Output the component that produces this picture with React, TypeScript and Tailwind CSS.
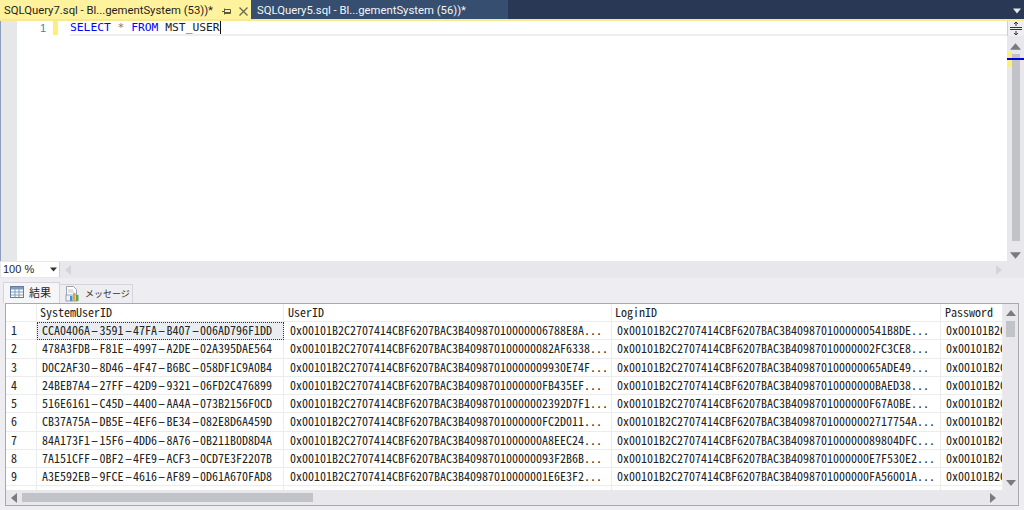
const rows = [
  ["CCA0406A-3591-47FA-B407-006AD796F1DD", "0x00101B2C2707414CBF6207BAC3B40987010000006788E8A...", "0x00101B2C2707414CBF6207BAC3B4098701000000541B8DE..."],
  ["478A3FDB-F81E-4997-A2DE-02A395DAE564", "0x00101B2C2707414CBF6207BAC3B409870100000082AF6338...", "0x00101B2C2707414CBF6207BAC3B40987010000002FC3CE8..."],
  ["D0C2AF30-8D46-4F47-B6BC-058DF1C9A0B4", "0x00101B2C2707414CBF6207BAC3B40987010000009930E74F...", "0x00101B2C2707414CBF6207BAC3B409870100000065ADE49..."],
  ["24BEB7A4-27FF-42D9-9321-06FD2C476899", "0x00101B2C2707414CBF6207BAC3B4098701000000FB435EF...", "0x00101B2C2707414CBF6207BAC3B40987010000000BAED38..."],
  ["516E6161-C45D-4400-AA4A-073B2156F0CD", "0x00101B2C2707414CBF6207BAC3B40987010000002392D7F1...", "0x00101B2C2707414CBF6207BAC3B4098701000000F67A0BE..."],
  ["CB37A75A-DB5E-4EF6-BE34-082E8D6A459D", "0x00101B2C2707414CBF6207BAC3B4098701000000FC2D011...", "0x00101B2C2707414CBF6207BAC3B40987010000002717754A..."],
  ["84A173F1-15F6-4DD6-8A76-0B211B0D8D4A", "0x00101B2C2707414CBF6207BAC3B4098701000000A8EEC24...", "0x00101B2C2707414CBF6207BAC3B409870100000089804DFC..."],
  ["7A151CFF-0BF2-4FE9-ACF3-0CD7E3F2207B", "0x00101B2C2707414CBF6207BAC3B409870100000093F2B6B...", "0x00101B2C2707414CBF6207BAC3B4098701000000E7F530E2..."],
  ["A3E592EB-9FCE-4616-AF89-0D61A670FAD8", "0x00101B2C2707414CBF6207BAC3B40987010000001E6E3F2...", "0x00101B2C2707414CBF6207BAC3B4098701000000FA56001A..."],
];

const cols = "grid grid-cols-[31px_247px_328px_329px_62px]";
const cell = "border-r border-b border-[#ececec] overflow-hidden whitespace-nowrap";

function Tri({ dir, color = "#7a7a80", size = 9 }: { dir: "up" | "down" | "left" | "right"; color?: string; size?: number }) {
  const pts = { up: "0,8 5,2 10,8", down: "0,2 10,2 5,8", left: "8,0 8,10 2,5", right: "2,0 2,10 8,5" }[dir];
  return (
    <svg width={size} height={size} viewBox="0 0 10 10" className="block shrink-0">
      <polygon points={pts} fill={color} />
    </svg>
  );
}

function GridIcon() {
  return (
    <svg width="14" height="12" viewBox="0 0 14 12" className="block shrink-0">
      <rect x="0.5" y="0.5" width="13" height="11" fill="#fff" stroke="#5f7da3" />
      <rect x="1" y="1" width="12" height="2.5" fill="#7d9cc4" />
      <path d="M1 6h12M1 9h12M5 1v10M9 1v10" stroke="#7f9abb" strokeWidth="1" />
    </svg>
  );
}

function MsgIcon() {
  return (
    <svg width="15" height="16" viewBox="0 0 15 16" className="block shrink-0">
      <path d="M1.5 0.5h7l3 3v6h-10z" fill="#fff" stroke="#9aa3ad" />
      <path d="M3 4h5M3 6h6" stroke="#b9c2cc" />
      <rect x="1" y="9" width="11" height="6" fill="#f2f2f2" stroke="#9aa3ad" />
      <rect x="5" y="10" width="2.5" height="5" fill="#4f8fd0" />
      <rect x="8" y="7" width="2.5" height="8" fill="#e8a33d" />
      <rect x="11" y="9" width="2.5" height="6" fill="#5aa55a" />
    </svg>
  );
}

function Guid({ value }: { value: string }) {
  const parts = value.split("-");
  return (
    <>
      {parts.map((p, i) => (
        <span key={i}>
          {i > 0 && <span className="inline-block w-[9.5px] text-center scale-x-[1.7]">-</span>}
          {p}
        </span>
      ))}
    </>
  );
}

export default function App() {
  return (
    <div className="w-[1024px] h-[510px] overflow-hidden flex flex-col bg-[#eeeef2] font-['Liberation_Sans',sans-serif] text-[#1e1e1e]">
      {/* Tab strip */}
      <div className="h-[19px] shrink-0 bg-[#293955] flex items-stretch">
        <div className="w-[251px] bg-[#fff29d] flex items-center pl-[4px] pt-[3px] font-['Roboto',sans-serif] text-[11.3px] leading-[14px] text-[#1e1e1e] shrink-0">
          <span className="whitespace-nowrap">SQLQuery7.sql - Bl...gementSystem (53))*</span>
          <svg width="9" height="7" viewBox="0 0 9 7" className="ml-auto mr-[8px]">
            <path d="M0 3.5h2.5M2.5 0.5v6M2.5 1.5h6v4h-6M3 4.5h5" fill="none" stroke="#5b5b45" strokeWidth="1" />
          </svg>
          <svg width="9" height="9" viewBox="0 0 9 9" className="mr-[3px]">
            <path d="M0.5 0.5l8 8M8.5 0.5l-8 8" stroke="#6b6b55" strokeWidth="1.4" />
          </svg>
        </div>
        <div className="w-[257px] bg-[#364e6f] flex items-center pl-[6px] pt-[3px] font-['Roboto',sans-serif] text-[11.3px] leading-[14px] text-[#f4f6f9] shrink-0">
          <span className="whitespace-nowrap">SQLQuery5.sql - Bl...gementSystem (56))*</span>
        </div>
        <div className="flex-1 flex items-center justify-end pr-[3px] pt-[3px]">
          <Tri dir="down" color="#e6e9ef" size={8} />
        </div>
      </div>
      <div className="h-[2px] shrink-0 bg-[#f7e98e]" />

      {/* Editor */}
      <div className="h-[240px] shrink-0 flex bg-white">
        <div className="w-[17px] shrink-0 bg-[#e6e7e8] border-l border-[#8d9cba]" />
        <div className="w-[36px] shrink-0 flex justify-end items-start text-[11px] text-[#2b91af] pr-[7px] h-[14px] leading-[14px]">1</div>
        <div className="w-[5px] h-[14px] shrink-0 bg-[#fdee7d]" />
        <div className="flex-1 pl-[12px]">
          <div className="h-[13px] border-b-2 border-[#eeeef2] box-content font-['DejaVu_Sans_Mono',monospace] text-[11.3px] leading-[13px] whitespace-nowrap flex items-center">
            <span className="text-[#0000ff]">SELECT</span>
            <span className="text-[#777]">&nbsp;*&nbsp;</span>
            <span className="text-[#0000ff]">FROM</span>
            <span className="text-[#222]">&nbsp;MST_USER</span>
            <span className="w-px h-[13px] bg-[#111]" />
          </div>
        </div>
        <div className="w-[17px] shrink-0 bg-[#e8e8ec] flex flex-col items-center relative">
          <div className="h-[15px] w-full flex items-center justify-center bg-[#eeeef2] border-l border-[#cccedb]">
            <svg width="12" height="13" viewBox="0 0 12 13">
              <path d="M0 5.5h12M0 7.5h12M6 0v4M6 9v4M4 2l2-2 2 2M4 11l2 2 2-2" fill="none" stroke="#333" strokeWidth="1" />
            </svg>
          </div>
          <div className="mt-[5px]"><Tri dir="up" size={11} /></div>
          <div className="mt-[2px] w-[8px] h-[187px] bg-[#c2c3c9]" />
          <div className="mt-[9px]"><Tri dir="down" size={11} /></div>
          <div className="absolute left-[1px] top-[31px] w-[4px] h-[15px] bg-[#fdee7d]" />
          <div className="absolute left-0 right-0 top-[37px] h-[2px] bg-[#0000dd]" />
        </div>
      </div>

      {/* Zoom bar */}
      <div className="h-[17px] shrink-0 bg-[#e8e8ec] flex items-center">
        <div className="w-[59px] h-[15px] ml-[1px] bg-white border-r border-[#cccedb] flex items-center pl-[2px] text-[11px]">
          100 %
          <span className="ml-auto mr-[2px]"><Tri dir="down" color="#333" size={7} /></span>
        </div>
        <span className="ml-[3px]"><Tri dir="left" color="#d4d5da" size={10} /></span>
        <span className="ml-auto mr-[20px]"><Tri dir="right" color="#d4d5da" size={10} /></span>
      </div>

      {/* Result tabs */}
      <div className="h-[25px] shrink-0 flex items-end pl-[3px] text-[11px]">
        <div className="w-[57px] h-[21px] bg-[#f6f6f8] border border-b-0 border-[#d4d4da] flex items-center gap-[5px] pl-[6px] pb-[2px] font-['Noto_Sans_CJK_JP',sans-serif]">
          <GridIcon />
          <span>結果</span>
        </div>
        <div className="w-[73px] h-[19px] bg-[#eeeef2] border border-b-0 border-l-0 border-[#d4d4da] flex items-center gap-[5px] pl-[5px] pb-[1px] font-['Noto_Sans_CJK_JP',sans-serif] text-[9px] text-[#333] whitespace-nowrap">
          <MsgIcon />
          <span>メッセージ</span>
        </div>
      </div>

      {/* Results grid */}
      <div className="h-[203px] shrink-0 mx-[5px] w-[1014px] border border-[#a9a9b0] flex bg-[#e8e8ec]">
        <div className="w-[997px] shrink-0 flex flex-col">
          <div className="h-[186px] shrink-0 overflow-hidden bg-white font-['Noto_Sans_CJK_JP',sans-serif] [font-feature-settings:'hwid'] text-[12px] text-[#222]">
            <div className={`${cols} h-[18px] leading-[15px]`}>
              <div className={cell} />
              <div className={`${cell} pl-[3px]`}>SystemUserID</div>
              <div className={`${cell} pl-[4px]`}>UserID</div>
              <div className={`${cell} pl-[3px]`}>LoginID</div>
              <div className={`${cell} pl-[4px]`}>Password</div>
            </div>
            {rows.map((r, i) => (
              <div key={i} className={`${cols} h-[18.25px] leading-[15px]`}>
                <div className={`${cell} pl-[5px]`}>{i + 1}</div>
                <div className={i === 0 ? "border border-dotted border-[#333] bg-[#e9edf1] pl-[4px] leading-[14px] whitespace-nowrap overflow-hidden" : `${cell} pl-[5px]`}>
                  <Guid value={r[0]} />
                </div>
                <div className={`${cell} pl-[6px]`}>{r[1]}</div>
                <div className={`${cell} pl-[5px]`}>{r[2]}</div>
                <div className={`${cell} pl-[5px]`}>0x00101B2C2707414</div>
              </div>
            ))}
            <div className={`${cols} h-[6px]`}>
              <div className="border-r border-[#ececec]" />
              <div className="border-r border-[#ececec]" />
              <div className="border-r border-[#ececec]" />
              <div className="border-r border-[#ececec]" />
              <div className="border-r border-[#ececec]" />
            </div>
          </div>
          <div className="flex-1 flex items-center pl-[3px]">
            <Tri dir="left" size={10} />
            <div className="ml-[3px] w-[291px] h-[9px] bg-[#c2c3c9]" />
            <span className="ml-auto mr-[5px]"><Tri dir="right" size={10} /></span>
          </div>
        </div>
        <div className="flex-1 flex flex-col items-center pt-[4px]">
          <Tri dir="up" size={10} />
          <div className="mt-[3px] w-[9px] h-[16px] bg-[#c2c3c9]" />
          <div className="mt-auto mb-[17px]"><Tri dir="down" size={10} /></div>
        </div>
      </div>
    </div>
  );
}
